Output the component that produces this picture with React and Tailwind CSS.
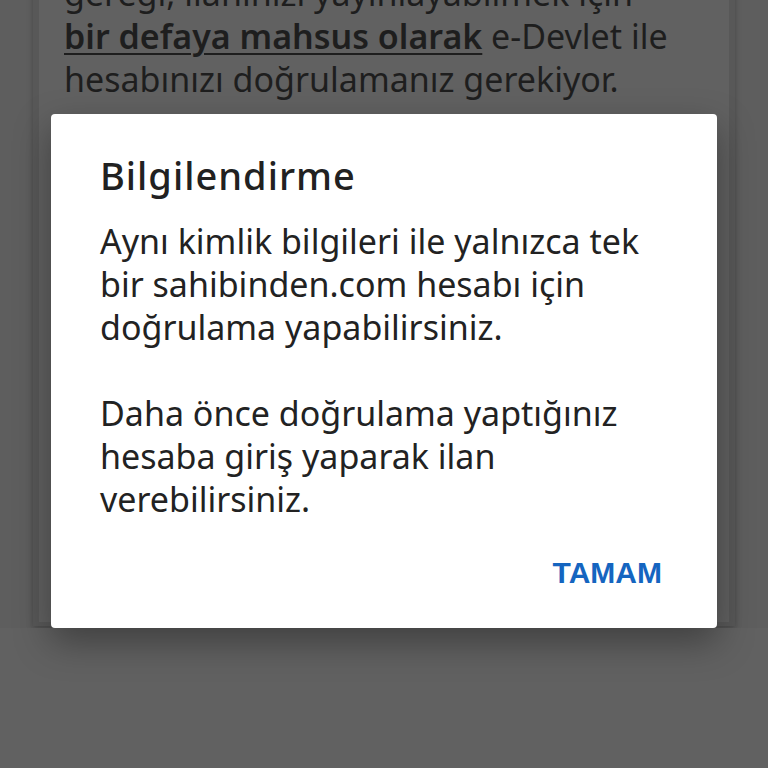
export default function App() {
  const font = { fontFamily: '"Noto Sans", "Open Sans", sans-serif' }
  return (
    <div className="relative h-[768px] w-[768px] overflow-hidden bg-[#5e5e5e]" style={font}>
      {/* page behind the dialog */}
      <div className="mx-[33px] -mt-[28px] h-[654px] border-x-[6px] border-b-[4px] border-[#585858] bg-[#616161] px-[25px] text-[34px] leading-[43px] text-[#1e1e1e] shadow-[0_2px_6px_rgba(0,0,0,0.25)]">
        <p className="whitespace-nowrap">gereği, ilanınızı yayınlayabilmek için</p>
        <p className="whitespace-nowrap">
          <span className="font-semibold underline decoration-2 underline-offset-4">bir defaya mahsus olarak</span> e-Devlet ile
        </p>
        <p className="whitespace-nowrap">hesabınızı doğrulamanız gerekiyor.</p>
      </div>
      <div className="absolute inset-x-0 bottom-0 h-[140px] bg-[#616161]" />

      {/* dialog */}
      <div className="absolute left-[51px] top-[114px] w-[666px] rounded-[4px] bg-white pl-[49px] pr-[55px] pt-[36px] pb-[37px] shadow-[0_14px_36px_rgba(0,0,0,0.35)]">
        <h2 className="text-[38px] font-medium leading-[50px] tracking-[1px] text-[#212121]">Bilgilendirme</h2>
        <div className="mt-[20px] whitespace-nowrap text-[34px] leading-[43px] text-[#222]">
          <p>
            Aynı kimlik bilgileri ile yalnızca tek<br />
            bir sahibinden.com hesabı için<br />
            doğrulama yapabilirsiniz.
          </p>
          <p className="mt-[43px]">
            Daha önce doğrulama yaptığınız<br />
            hesaba giriş yaparak ilan<br />
            verebilirsiniz.
          </p>
        </div>
        <div className="mt-[34px] flex justify-end">
          <button className="text-[30px] font-bold leading-[36px] text-[#1565c0]" style={{ fontFamily: '"Liberation Sans", Arial, sans-serif' }}>
            TAMAM
          </button>
        </div>
      </div>
    </div>
  )
}
